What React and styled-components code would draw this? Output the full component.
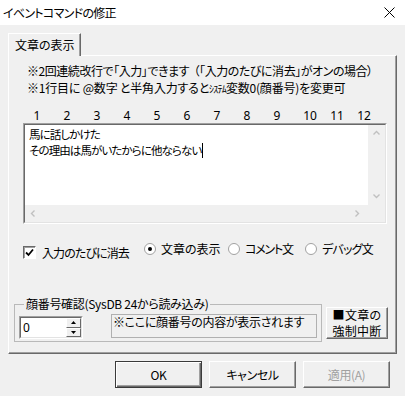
import React from "react";
import styled, { createGlobalStyle } from "styled-components";

const Global = createGlobalStyle`
  html, body { margin: 0; padding: 0; background: #f0f0f0; }
  body {
    font-family: "Noto Sans CJK JP", "Noto Sans", sans-serif;
    font-size: 12px;
    color: #000;
    font-feature-settings: "palt";
    letter-spacing: -0.4px;
  }
  * { box-sizing: border-box; }
`;

const Window = styled.div`
  width: 405px;
  height: 396px;
  background: #f0f0f0;
  display: flex;
  flex-direction: column;
  overflow: hidden;
`;

const TitleBar = styled.div`
  height: 25px;
  background: #fff;
  display: flex;
  align-items: center;
  justify-content: space-between;
  padding: 0 10px 0 3px;
  font-size: 12px;
  line-height: 25px;
  letter-spacing: -0.7px;
`;

const Body = styled.div`
  padding: 8px 8px 0 8px;
  display: flex;
  flex-direction: column;
`;

const TabRow = styled.div`
  display: flex;
  align-items: flex-end;
  height: 23px;
`;

const Tab = styled.div`
  width: 73px;
  height: 23px;
  border-top: 1px solid #fff;
  border-left: 1px solid #fff;
  border-right: 1px solid #696969;
  box-shadow: inset -1px 0 0 #a0a0a0;
  padding-left: 6px;
  line-height: 21px;
  letter-spacing: 0;
`;

const TabFiller = styled.div`
  flex: 1;
  border-bottom: 1px solid #fff;
  border-right: 1px solid #696969;
  height: 1px;
`;

const Panel = styled.div`
  height: 298px;
  border-left: 1px solid #fff;
  border-right: 1px solid #696969;
  border-bottom: 1px solid #696969;
  box-shadow: inset -1px -1px 0 #a0a0a0;
  padding: 6px 8px 0 14px;
  display: flex;
  flex-direction: column;
`;

const Hint = styled.div`
  padding-left: 4px;
  line-height: 17px;
  white-space: pre;
  letter-spacing: ${(p) => p.$ls ?? -0.3}px;
`;

const Small = styled.span`
  font-size: 10px;
  letter-spacing: -0.8px;
`;

const NumberRow = styled.div`
  display: flex;
  margin-top: 11px;
  margin-left: -1px;
  height: 15px;
  line-height: 15px;
  letter-spacing: 0;
`;

const NumCell = styled.span`
  width: ${(p) => p.$w}px;
  text-align: center;
  font-family: "Noto Sans", sans-serif;
  font-size: 12px;
`;

const Sunken = styled.div`
  border: 1px solid;
  border-color: #a0a0a0 #fff #fff #a0a0a0;
`;

const SunkenInner = styled.div`
  border: 1px solid;
  border-color: #696969 #e3e3e3 #e3e3e3 #696969;
  height: 100%;
`;

const TextBoxOuter = styled(Sunken)`
  width: 364px;
  height: 101px;
`;

const TextGrid = styled(SunkenInner)`
  display: grid;
  grid-template-columns: 1fr 17px;
  grid-template-rows: 1fr 17px;
`;

const EditArea = styled.div`
  background: #fff;
  padding: 1px 4px;
  line-height: 16px;
  font-size: 11.5px;
  letter-spacing: -0.9px;
`;

const Caret = styled.span`
  display: inline-block;
  width: 1px;
  height: 15px;
  margin-left: 1px;
  background: #000;
  vertical-align: -3px;
`;

const VScroll = styled.div`
  background: #f0f0f0;
  display: flex;
  flex-direction: column;
  justify-content: space-between;
  align-items: center;
  padding: 5px 0 6px;
`;

const HScroll = styled.div`
  background: #f0f0f0;
  display: flex;
  justify-content: space-between;
  align-items: center;
  padding: 0 8px 0 5px;
`;

const Corner = styled.div`
  background: #f0f0f0;
`;

const OptionRow = styled.div`
  display: flex;
  align-items: flex-start;
  margin-top: 16px;
  height: 40px;
`;

const CheckLabel = styled.label`
  display: flex;
  align-items: center;
  gap: 6px;
  margin-top: 4px;
  width: 121px;
  letter-spacing: -0.9px;
`;

const CheckBox = styled.span`
  width: 13px;
  height: 13px;
  border: 1px solid;
  border-color: #696969 #fff #fff #696969;
  box-shadow: inset 1px 1px 0 #a0a0a0;
  background: #fff;
  display: flex;
  align-items: center;
  justify-content: center;
`;

const RadioLabel = styled.label`
  display: flex;
  align-items: center;
  gap: 5px;
  margin-top: 3px;
  width: ${(p) => p.$w}px;
  line-height: 12px;
  letter-spacing: ${(p) => p.$ls ?? -0.4}px;
`;

const Lower = styled.div`
  display: flex;
  align-items: flex-end;
  margin-top: 17px;
  margin-left: -9px;
  gap: 4px;
`;

const GroupBox = styled.fieldset`
  margin: 0;
  width: 309px;
  height: 45px;
  border: 1px solid #b9b9b9;
  padding: 2px 4px 2px 4px;
  display: flex;
  align-items: flex-start;
  gap: 28px;
`;

const Legend = styled.legend`
  padding: 0 2px;
  margin-left: 5px;
  line-height: 14px;
  letter-spacing: -0.3px;
`;

const SpinBox = styled(Sunken)`
  width: 64px;
  height: 23px;
  margin-top: 3px;
`;

const SpinGrid = styled(SunkenInner)`
  display: grid;
  grid-template-columns: 1fr 15px;
  background: #fff;
`;

const SpinValue = styled.div`
  padding-left: 2px;
  line-height: 19px;
  font-family: "Noto Sans", sans-serif;
`;

const SpinButtons = styled.div`
  display: flex;
  flex-direction: column;
`;

const SpinBtn = styled.div`
  flex: 1;
  background: #f0f0f0;
  border: 1px solid;
  border-color: #fff #696969 #696969 #fff;
  display: flex;
  align-items: center;
  justify-content: center;
`;

const InfoBox = styled.div`
  width: 206px;
  height: 24px;
  margin-top: 1px;
  border: 1px solid #b0b0b0;
  padding-left: 1px;
  line-height: 13px;
  letter-spacing: -0.3px;
`;

const Button = styled.div`
  width: ${(p) => p.$w || 87}px;
  height: ${(p) => p.$h || 27}px;
  background: #f0f0f0;
  border: 1px solid;
  border-color: ${(p) => (p.$default ? "#3a3a3a" : "#fff #696969 #696969 #fff")};
  box-shadow: ${(p) =>
    p.$default
      ? "inset 1px 1px 0 #fff, inset -1px -1px 0 #696969, inset -2px -2px 0 #a0a0a0"
      : "inset -1px -1px 0 #a0a0a0"};
  color: ${(p) => (p.$disabled ? "#a0a0a0" : "#000")};
  display: flex;
  flex-direction: column;
  align-items: center;
  justify-content: center;
  text-align: center;
  line-height: 16px;
`;

const StopButton = styled(Button)`
  margin-bottom: 3px;
  letter-spacing: 0.3px;
`;

const Footer = styled.div`
  display: flex;
  justify-content: flex-end;
  gap: 7px;
  padding: 7px 7px 0 0;
`;

const Chevron = ({ dir }) => {
  const paths = {
    up: "M0.5 4.5 L3.5 1.5 L6.5 4.5",
    down: "M0.5 1.5 L3.5 4.5 L6.5 1.5",
  };
  const hpaths = {
    left: "M4.5 0.5 L1.5 3.5 L4.5 6.5",
    right: "M1.5 0.5 L4.5 3.5 L1.5 6.5",
  };
  if (paths[dir])
    return (
      <svg width="7" height="6" viewBox="0 0 7 6">
        <path d={paths[dir]} fill="none" stroke="#c0c0c0" strokeWidth="1.4" />
      </svg>
    );
  return (
    <svg width="6" height="7" viewBox="0 0 6 7">
      <path d={hpaths[dir]} fill="none" stroke="#c0c0c0" strokeWidth="1.4" />
    </svg>
  );
};

const Radio = ({ checked }) => (
  <svg width="12" height="12" viewBox="0 0 12 12">
    <circle cx="6" cy="6" r="5.5" fill="#fff" stroke="#a0a0a0" />
    {checked && <circle cx="6" cy="6" r="2" fill="#000" />}
  </svg>
);

const Tri = ({ up }) => (
  <svg width="5" height="3" viewBox="0 0 5 3">
    <path d={up ? "M2.5 0 L5 3 L0 3 Z" : "M0 0 L5 0 L2.5 3 Z"} fill="#000" />
  </svg>
);

const nums = [
  ["1", 30], ["2", 30], ["3", 30], ["4", 30], ["5", 30], ["6", 30],
  ["7", 30], ["8", 30], ["9", 30], ["10", 36], ["11", 18], ["12", 36],
];

export default function App() {
  return (
    <Window>
      <Global />
      <TitleBar>
        <span>イベントコマンドの修正</span>
        <svg width="11" height="11" viewBox="0 0 11 11">
          <path d="M0.5 0.5 L10.5 10.5 M10.5 0.5 L0.5 10.5" stroke="#000" strokeWidth="1" />
        </svg>
      </TitleBar>
      <Body>
        <TabRow>
          <Tab>文章の表示</Tab>
          <TabFiller />
        </TabRow>
        <Panel>
          <Hint $ls={-0.45}>{"※2回連続改行で「入力」できます  （「入力のたびに消去」がオンの場合）"}</Hint>
          <Hint $ls={-0.2}>
            ※1行目に @数字 と半角入力すると<Small>ｼｽﾃﾑ</Small>変数0(顔番号)を変更可
          </Hint>
          <NumberRow>
            {nums.map(([n, w]) => (
              <NumCell key={n} $w={w}>{n}</NumCell>
            ))}
          </NumberRow>
          <TextBoxOuter>
            <TextGrid>
              <EditArea>
                馬に話しかけた
                <br />
                その理由は馬がいたからに他ならない<Caret />
              </EditArea>
              <VScroll>
                <Chevron dir="up" />
                <Chevron dir="down" />
              </VScroll>
              <HScroll>
                <Chevron dir="left" />
                <Chevron dir="right" />
              </HScroll>
              <Corner />
            </TextGrid>
          </TextBoxOuter>
          <OptionRow>
            <CheckLabel>
              <CheckBox>
                <svg width="9" height="9" viewBox="0 0 9 9">
                  <path d="M1 4.5 L3.5 7 L8 1.5" fill="none" stroke="#000" strokeWidth="1.8" />
                </svg>
              </CheckBox>
              入力のたびに消去
            </CheckLabel>
            <RadioLabel $w={84} $ls={0}>
              <Radio checked />
              文章の表示
            </RadioLabel>
            <RadioLabel $w={77} $ls={-1.2}>
              <Radio />
              コメント文
            </RadioLabel>
            <RadioLabel $w={80} $ls={-0.8}>
              <Radio />
              デバッグ文
            </RadioLabel>
          </OptionRow>
          <Lower>
            <GroupBox>
              <Legend>顔番号確認(SysDB 24から読み込み)</Legend>
              <SpinBox>
                <SpinGrid>
                  <SpinValue>0</SpinValue>
                  <SpinButtons>
                    <SpinBtn><Tri up /></SpinBtn>
                    <SpinBtn><Tri /></SpinBtn>
                  </SpinButtons>
                </SpinGrid>
              </SpinBox>
              <InfoBox>※ここに顔番号の内容が表示されます</InfoBox>
            </GroupBox>
            <StopButton $w={66} $h={32}>
              <span>■文章の</span>
              <span>強制中断</span>
            </StopButton>
          </Lower>
        </Panel>
        <Footer>
          <Button $default>OK</Button>
          <Button>キャンセル</Button>
          <Button $disabled>適用(A)</Button>
        </Footer>
      </Body>
    </Window>
  );
}
